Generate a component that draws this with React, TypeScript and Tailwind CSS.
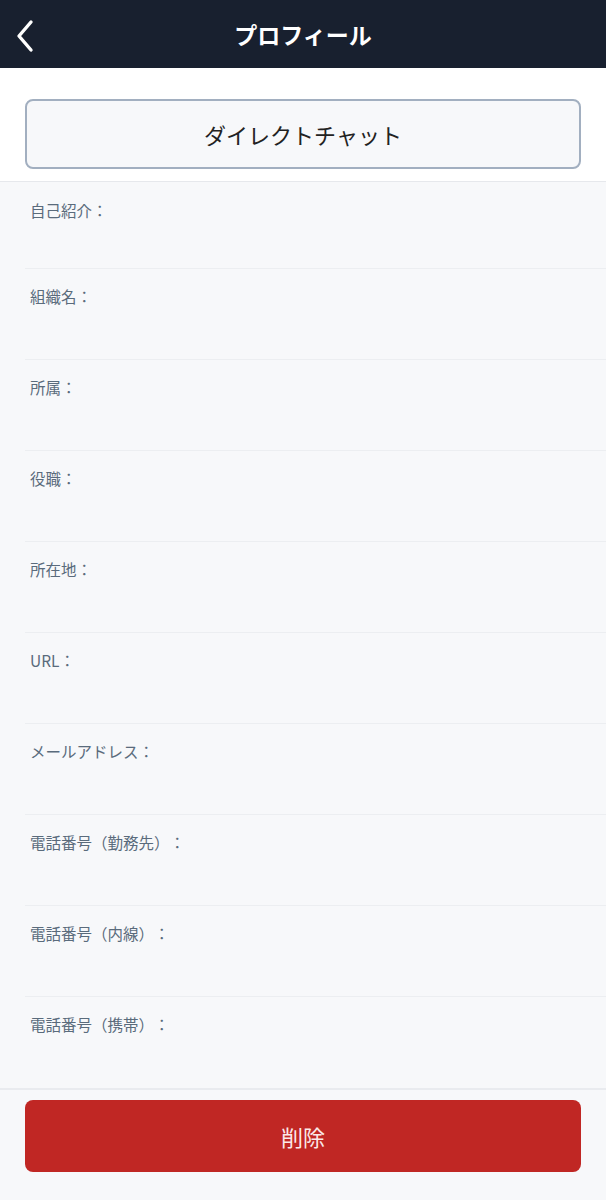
const fields = [
  "自己紹介：",
  "組織名：",
  "所属：",
  "役職：",
  "所在地：",
  "URL：",
  "メールアドレス：",
  "電話番号（勤務先）：",
  "電話番号（内線）：",
  "電話番号（携帯）：",
];

export default function App() {
  return (
    <div
      className="min-h-[1200px] w-[606px] bg-[#f7f8fa]"
      style={{ fontFamily: '"Noto Sans CJK JP", "Noto Sans", sans-serif' }}
    >
      {/* header */}
      <div className="relative flex h-[68px] items-center justify-center bg-[#18202f]">
        <button type="button" className="absolute left-[12px] top-[17px] p-[2px]">
          <svg width="22" height="34" viewBox="0 0 22 34" fill="none">
            <path d="M17 3 L5 17 L17 31" stroke="white" strokeWidth="3.4" strokeLinecap="round" strokeLinejoin="round" />
          </svg>
        </button>
        <h1 className="text-[23px] font-bold text-white">プロフィール</h1>
      </div>

      {/* direct chat */}
      <div className="border-b border-[#e6e8ec] bg-white px-[25px] pb-[12px] pt-[31px]">
        <button
          type="button"
          className="flex h-[70px] w-full items-center justify-center rounded-[8px] border-2 border-[#a2afc0] bg-[#f7f8fa] text-[22px] text-[#222]"
        >
          ダイレクトチャット
        </button>
      </div>

      {/* fields */}
      <div className="border-b-2 border-[#e9ebef]">
        {fields.map((f, i) => (
          <div
            key={f}
            className={`ml-[25px] ${i === 0 ? "h-[87px] pt-[18px]" : "h-[91px] pt-[17px]"} ${i < fields.length - 1 ? "border-b border-[#eceef1]" : ""}`}
          >
            <div className="pl-[5px] text-[15.5px] leading-[20px] text-[#5a6b7c] [text-spacing-trim:space-all]">{f}</div>
          </div>
        ))}
      </div>

      {/* delete */}
      <div className="px-[25px] pt-[10px]">
        <button
          type="button"
          className="flex h-[72px] w-full items-center justify-center rounded-[8px] bg-[#c02724] text-[22px] text-[#fbe9e9]"
        >
          削除
        </button>
      </div>
    </div>
  );
}
